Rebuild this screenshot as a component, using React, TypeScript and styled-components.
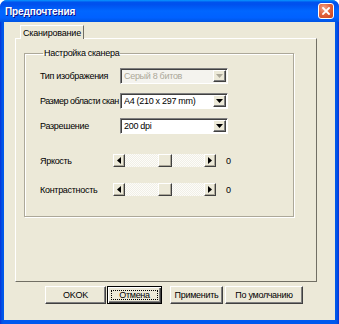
import React from 'react';
import styled, { createGlobalStyle } from 'styled-components';

const Global = createGlobalStyle`
  html, body { margin: 0; padding: 0; background: #ffffff; }
  body { font-family: "Liberation Sans", Arial, sans-serif; font-size: 9px; letter-spacing: -0.3px; color: #000; }
  * { box-sizing: border-box; }
`;

const Window = styled.div`
  width: 339px;
  height: 324px;
  display: flex;
  flex-direction: column;
  border-radius: 7px 7px 0 0;
  overflow: hidden;
  background: linear-gradient(90deg, #0831d9 0px, #0055e5 2px, #0058ee 4px, #0058ee 335px, #0055e5 337px, #0831d9 339px);
`;

const TitleBar = styled.div`
  height: 22px;
  flex: none;
  display: flex;
  align-items: center;
  justify-content: space-between;
  padding: 0 5px 0 5px;
  background: linear-gradient(180deg, #0997ff 0%, #0053ee 10%, #0050ee 20%, #0066ff 50%, #0061ff 80%, #0054e3 100%);
`;

const Title = styled.span`
  color: #ffffff;
  font-weight: bold;
  font-size: 10px;
  letter-spacing: -0.1px;
  text-shadow: 1px 1px #0f1089;
`;

const CloseButton = styled.div`
  width: 16px;
  height: 16px;
  border: 1px solid #ffffff;
  border-radius: 3px;
  background: radial-gradient(circle at 35% 30%, #f0a58a 0%, #e3653f 45%, #c6401c 100%);
  display: flex;
  align-items: center;
  justify-content: center;
`;

const Body = styled.div`
  flex: 1;
  margin: 0 4px 4px 4px;
  background: #ece9d8;
  display: flex;
  flex-direction: column;
  padding: 3px 0 0 0;
`;

const TabStrip = styled.div`
  display: flex;
  padding-left: 16px;
  height: 13px;
`;

const Tab = styled.div`
  height: 14px;
  padding: 0 2px 0 2px;
  display: flex;
  align-items: center;
  border-top: 1px solid #ffffff;
  border-left: 1px solid #ffffff;
  border-right: 1px solid #716f64;
  background: #ece9d8;
  position: relative;
  z-index: 1;
  line-height: 12px;
  letter-spacing: -0.2px;
`;

const Panel = styled.div`
  margin-left: 11px;
  width: 302px;
  height: 244px;
  border-top: 1px solid #ffffff;
  border-left: 1px solid #ffffff;
  border-right: 1px solid #716f64;
  border-bottom: 1px solid #716f64;
  padding: 8px 0 0 8px;
`;

const Group = styled.fieldset`
  margin: 0;
  width: 270px;
  height: 170px;
  border: 1px solid #aca899;
  box-shadow: inset 1px 1px #ffffff, 1px 1px #ffffff;
  padding: 9px 0 0 15px;
  display: flex;
  flex-direction: column;
`;

const Caption = styled.legend`
  padding: 0 1px;
  margin-left: 3px;
  line-height: 12px;
`;

const FieldRow = styled.div<{ $gap?: number }>`
  display: flex;
  align-items: center;
  height: 16px;
  margin-top: ${(p) => p.$gap ?? 0}px;
`;

const Label = styled.div<{ $w: number; $tight?: boolean }>`
  width: ${(p) => p.$w}px;
  flex: none;
  white-space: nowrap;
  letter-spacing: ${(p) => (p.$tight ? '-0.5px' : 'inherit')};
`;

const Combo = styled.div<{ $disabled?: boolean }>`
  width: 108px;
  height: 16px;
  display: flex;
  border-top: 1px solid #808080;
  border-left: 1px solid #808080;
  border-right: 1px solid #ffffff;
  border-bottom: 1px solid #ffffff;
  box-shadow: inset 1px 1px #404040;
  background: ${(p) => (p.$disabled ? '#f4f3ee' : '#ffffff')};
  color: ${(p) => (p.$disabled ? '#aca899' : '#000000')};
  padding: 1px 1px 1px 3px;
`;

const ComboText = styled.div`
  flex: 1;
  line-height: 12px;
  white-space: nowrap;
  overflow: hidden;
`;

const ArrowButton = styled.div<{ $disabled?: boolean }>`
  width: 13px;
  flex: none;
  background: #ece9d8;
  border-top: 1px solid #ffffff;
  border-left: 1px solid #ffffff;
  border-right: 1px solid #404040;
  border-bottom: 1px solid #404040;
  box-shadow: inset -1px -1px #808080;
  display: flex;
  align-items: center;
  justify-content: center;
  color: ${(p) => (p.$disabled ? '#aca899' : '#000000')};
`;

const SliderRow = styled.div<{ $gap: number }>`
  display: flex;
  align-items: center;
  height: 13px;
  margin-top: ${(p) => p.$gap}px;
`;

const ScrollBar = styled.div`
  width: 103px;
  height: 13px;
  display: flex;
  background: repeating-conic-gradient(#fcfcf9 0 25%, #f1efe6 0 50%) 0 0 / 2px 2px;
`;

const ScrollArrow = styled.div`
  width: 12px;
  height: 13px;
  flex: none;
  background: #ece9d8;
  border-top: 1px solid #ffffff;
  border-left: 1px solid #ffffff;
  border-right: 1px solid #404040;
  border-bottom: 1px solid #404040;
  box-shadow: inset -1px -1px #aca899;
  display: flex;
  align-items: center;
  justify-content: center;
`;

const Track = styled.div`
  flex: 1;
  display: flex;
  padding-left: 33px;
`;

const Thumb = styled.div`
  width: 14px;
  height: 13px;
  background: #ece9d8;
  border-top: 1px solid #ffffff;
  border-left: 1px solid #ffffff;
  border-right: 1px solid #404040;
  border-bottom: 1px solid #404040;
  box-shadow: inset -1px -1px #aca899;
`;

const Value = styled.div`
  margin-left: 10px;
`;

const ButtonRow = styled.div`
  display: flex;
  margin-top: 4px;
  padding-left: 41px;
`;

const Button = styled.div<{ $w: number; $ml?: number; $default?: boolean }>`
  width: ${(p) => p.$w}px;
  height: 18px;
  margin-left: ${(p) => p.$ml ?? 0}px;
  background: #ece9d8;
  display: flex;
  align-items: stretch;
  justify-content: center;
  padding: ${(p) => (p.$default ? '3px' : '0')};
  border: 1px solid #000000;
  border-top-color: ${(p) => (p.$default ? '#000000' : '#ffffff')};
  border-left-color: ${(p) => (p.$default ? '#000000' : '#ffffff')};
  border-right-color: ${(p) => (p.$default ? '#000000' : '#404040')};
  border-bottom-color: ${(p) => (p.$default ? '#000000' : '#404040')};
  box-shadow: ${(p) =>
    p.$default
      ? 'inset 1px 1px #ffffff, inset -1px -1px #404040, inset -2px -2px #808080'
      : 'inset -1px -1px #808080'};
  line-height: 16px;
`;

const ButtonText = styled.span`
  flex: 1;
  display: flex;
  align-items: center;
  justify-content: center;
`;

const FocusText = styled.span`
  flex: 1;
  display: flex;
  align-items: center;
  justify-content: center;
  border: 1px dotted #000000;
  line-height: 10px;
`;

const DownArrow = () => (
  <svg width="7" height="4" viewBox="0 0 7 4">
    <path d="M0 0h7L3.5 4z" fill="currentColor" />
  </svg>
);

const SideArrow = ({ dir }: { dir: 'l' | 'r' }) => (
  <svg width="4" height="7" viewBox="0 0 4 7">
    <path d={dir === 'l' ? 'M4 0v7L0 3.5z' : 'M0 0v7l4-3.5z'} fill="#000" />
  </svg>
);

const Slider = () => (
  <ScrollBar>
    <ScrollArrow>
      <SideArrow dir="l" />
    </ScrollArrow>
    <Track>
      <Thumb />
    </Track>
    <ScrollArrow>
      <SideArrow dir="r" />
    </ScrollArrow>
  </ScrollBar>
);

export default function App() {
  return (
    <>
      <Global />
      <Window>
        <TitleBar>
          <Title>Предпочтения</Title>
          <CloseButton>
            <svg width="8" height="8" viewBox="0 0 8 8">
              <path d="M1 1l6 6M7 1L1 7" stroke="#fff" strokeWidth="1.8" strokeLinecap="square" />
            </svg>
          </CloseButton>
        </TitleBar>
        <Body>
          <TabStrip>
            <Tab>Сканирование</Tab>
          </TabStrip>
          <Panel>
            <Group>
              <Caption>Настройка сканера</Caption>
              <FieldRow>
                <Label $w={80}>Тип изображения</Label>
                <Combo $disabled>
                  <ComboText>Серый 8 битов</ComboText>
                  <ArrowButton $disabled>
                    <DownArrow />
                  </ArrowButton>
                </Combo>
              </FieldRow>
              <FieldRow $gap={9}>
                <Label $w={80} $tight>
                  Размер области скан
                </Label>
                <Combo>
                  <ComboText>A4 (210 x 297 mm)</ComboText>
                  <ArrowButton>
                    <DownArrow />
                  </ArrowButton>
                </Combo>
              </FieldRow>
              <FieldRow $gap={9}>
                <Label $w={80}>Разрешение</Label>
                <Combo>
                  <ComboText>200 dpi</ComboText>
                  <ArrowButton>
                    <DownArrow />
                  </ArrowButton>
                </Combo>
              </FieldRow>
              <SliderRow $gap={20}>
                <Label $w={73}>Яркость</Label>
                <Slider />
                <Value>0</Value>
              </SliderRow>
              <SliderRow $gap={16}>
                <Label $w={73}>Контрастность</Label>
                <Slider />
                <Value>0</Value>
              </SliderRow>
            </Group>
          </Panel>
          <ButtonRow>
            <Button $w={61}>
              <ButtonText>OKOK</ButtonText>
            </Button>
            <Button $w={55} $ml={1} $default>
              <FocusText>Отмена</FocusText>
            </Button>
            <Button $w={53} $ml={8}>
              <ButtonText>Применить</ButtonText>
            </Button>
            <Button $w={78} $ml={2}>
              <ButtonText>По умолчанию</ButtonText>
            </Button>
          </ButtonRow>
        </Body>
      </Window>
    </>
  );
}
